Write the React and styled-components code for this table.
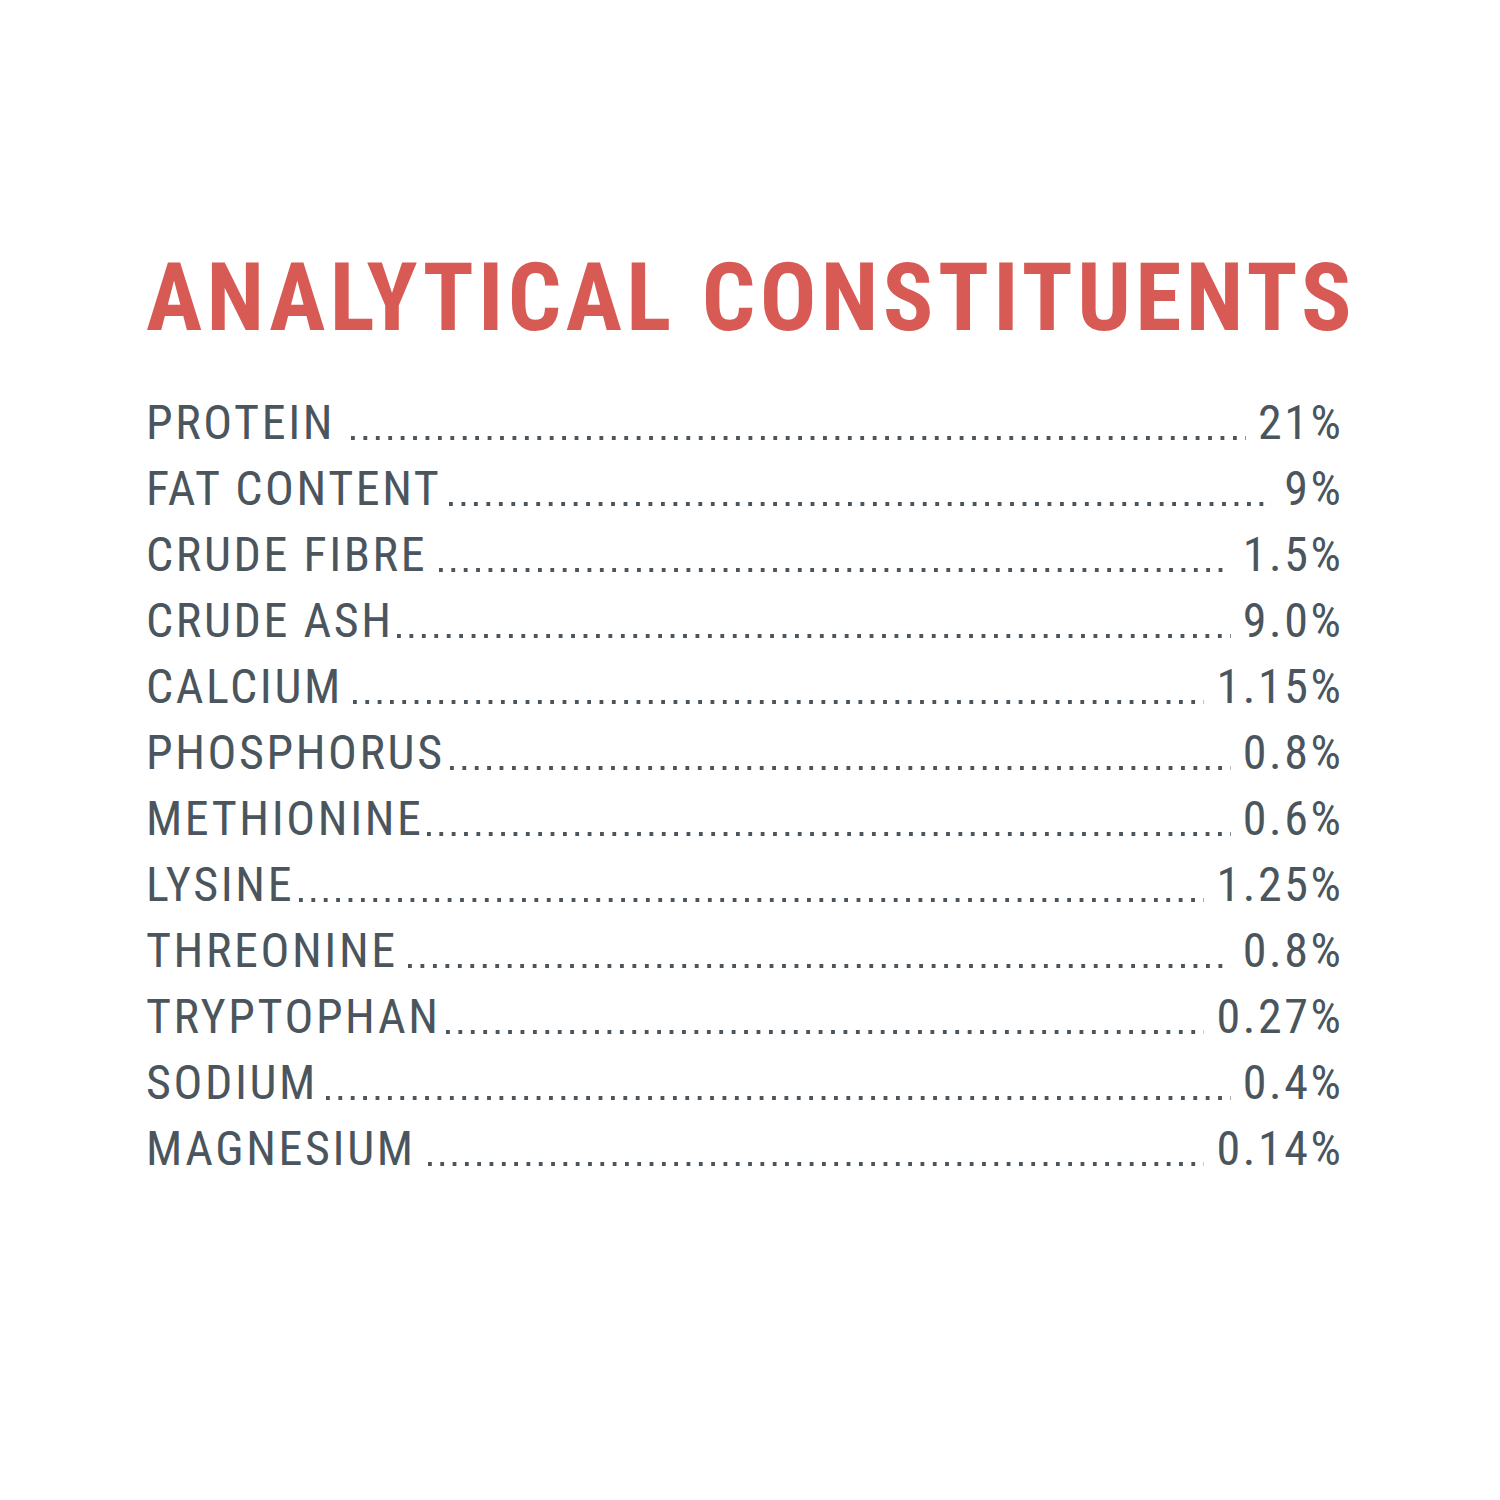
import React from "react";
import styled, { createGlobalStyle } from "styled-components";

const Global = createGlobalStyle`
  html, body { margin: 0; padding: 0; background: #ffffff; }
  body { font-family: "Roboto Condensed", Roboto, "Liberation Sans", sans-serif; }
`;

const Page = styled.main`
  width: 1500px;
  height: 1500px;
  box-sizing: border-box;
  padding: 251px 159px 0 146px;
  background: #ffffff;
`;

const Title = styled.h1`
  margin: 0 0 45px;
  font-family: "Roboto Condensed", Roboto, "Liberation Sans", sans-serif;
  font-weight: 700;
  font-size: 94px;
  line-height: 94px;
  letter-spacing: 4.4px;
  color: #d85a55;
  white-space: nowrap;
`;

const List = styled.ul`
  list-style: none;
  margin: 0;
  padding: 0;
`;

const Row = styled.li`
  display: flex;
  align-items: baseline;
  height: 66px;
  font-family: "Roboto Condensed", Roboto, "Liberation Sans", sans-serif;
  font-weight: 400;
  font-size: 48px;
  line-height: 66px;
  letter-spacing: 2.6px;
  color: #4b555d;
`;

const Label = styled.span`
  white-space: nowrap;
`;

const Leader = styled.span`
  flex: 1;
  align-self: stretch;
  margin: 0 ${(p) => p.$gapR}px 0 ${(p) => p.$gapL}px;
  background-image: linear-gradient(to right, #4b555d 0 4px, transparent 4px);
  background-size: 12.3px 4px;
  background-repeat: space no-repeat;
  background-position: left 0 top 46px;
`;

const Value = styled.span`
  white-space: nowrap;
  margin-right: -2.6px;
`;

const rows = [
  ["PROTEIN", "21%", 16, 12],
  ["FAT CONTENT", "9%", 8, 12],
  ["CRUDE FIBRE", "1.5%", 12, 12],
  ["CRUDE ASH", "9.0%", 3, 12],
  ["CALCIUM", "1.15%", 10, 12],
  ["PHOSPHORUS", "0.8%", 5, 12],
  ["METHIONINE", "0.6%", 3, 12],
  ["LYSINE", "1.25%", 5, 12],
  ["THREONINE", "0.8%", 10, 12],
  ["TRYPTOPHAN", "0.27%", 5, 12],
  ["SODIUM", "0.4%", 8, 12],
  ["MAGNESIUM", "0.14%", 12, 12],
];

export default function App() {
  return (
    <>
      <Global />
      <Page>
        <Title>ANALYTICAL CONSTITUENTS</Title>
        <List>
          {rows.map(([label, value, l, r]) => (
            <Row key={label}>
              <Label>{label}</Label>
              <Leader $gapL={l} $gapR={r} />
              <Value>{value}</Value>
            </Row>
          ))}
        </List>
      </Page>
    </>
  );
}
